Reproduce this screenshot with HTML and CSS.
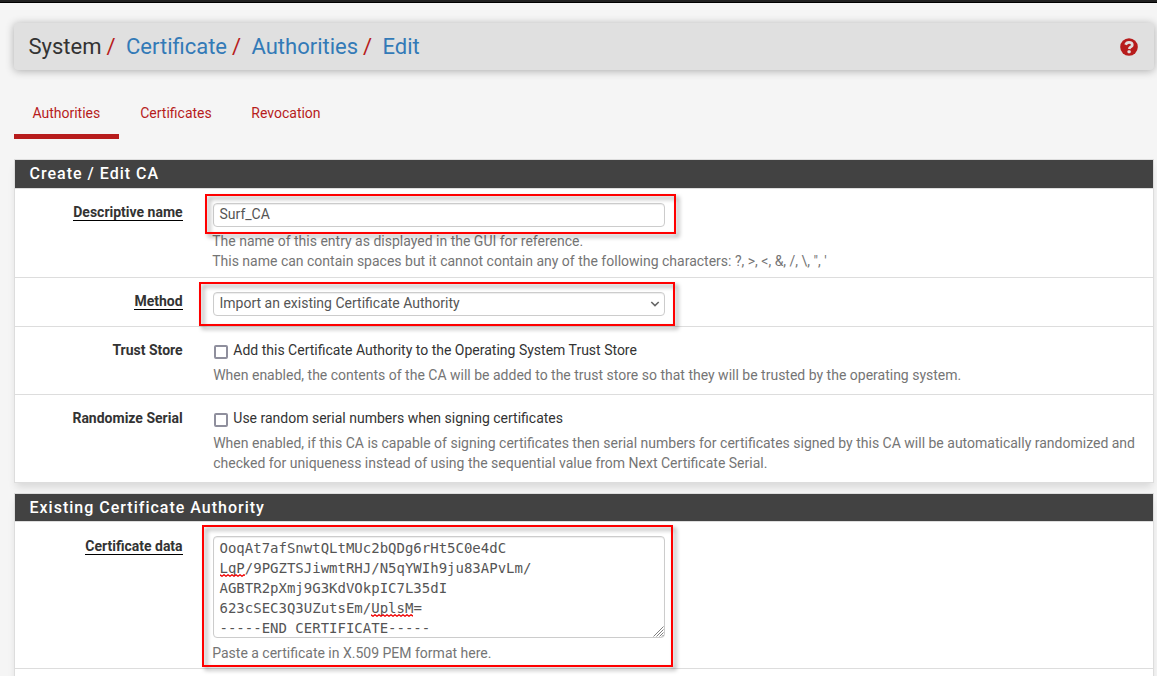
FILE: index.html
```html
<!DOCTYPE html>
<html lang="en">
<head>
<meta charset="utf-8">
<title>System: Certificate: Authorities: Edit</title>
<link rel="stylesheet" href="styles.css">
</head>
<body>
<div class="navbar"></div>
<header class="page-header">
  <div class="breadcrumb"><span>System</span><i>/</i><a>Certificate</a><i>/</i><a>Authorities</a><i>/</i><a>Edit</a></div>
  <svg class="help-icon" viewBox="0 0 18 18"><circle cx="9" cy="9" r="8.8" fill="#b71c1c"/><path d="M5.6 6.8C6.2 5 7.3 4.3 9 4.3c2 0 3.3 1 3.3 2.6 0 2-2.9 2.1-3.1 4.1" fill="none" stroke="#e0e0e0" stroke-width="2.7"/><rect x="7.5" y="12.2" width="3.2" height="3" rx="1" fill="#e0e0e0"/></svg>
</header>
<nav class="tabs"><a class="tab active">Authorities</a><a class="tab">Certificates</a><a class="tab">Revocation</a></nav>
<section class="panel">
  <h2 class="panel-heading">Create / Edit CA</h2>
  <div class="row row-name">
    <div class="label"><span class="required">Descriptive name</span></div>
    <div class="field">
      <div class="control">Surf_CA</div>
      <p class="help help-name">The name of this entry as displayed in the GUI for reference.<br>This name can contain spaces but it cannot contain any of the following characters: ?, &gt;, &lt;, &amp;, /, \, ", '</p>
      <div class="mark mark-name"></div>
    </div>
  </div>
  <div class="row row-method">
    <div class="label"><span class="required">Method</span></div>
    <div class="field">
      <div class="control select"><span>Import an existing Certificate Authority</span><svg class="chevron" viewBox="0 0 10 6"><path d="M1.3 1 5 4.6 8.7 1" fill="none" stroke="#666" stroke-width="1.6"/></svg></div>
      <div class="mark mark-method"></div>
    </div>
  </div>
  <div class="row row-trust">
    <div class="label"><span>Trust Store</span></div>
    <div class="field">
      <div class="check"><span class="box"></span><span>Add this Certificate Authority to the Operating System Trust Store</span></div>
      <p class="help help-check">When enabled, the contents of the CA will be added to the trust store so that they will be trusted by the operating system.</p>
    </div>
  </div>
  <div class="row row-serial">
    <div class="label"><span>Randomize Serial</span></div>
    <div class="field">
      <div class="check"><span class="box"></span><span>Use random serial numbers when signing certificates</span></div>
      <p class="help help-check">When enabled, if this CA is capable of signing certificates then serial numbers for certificates signed by this CA will be automatically randomized and<br>checked for uniqueness instead of using the sequential value from Next Certificate Serial.</p>
    </div>
  </div>
</section>
<section class="panel panel-existing">
  <h2 class="panel-heading heading-existing">Existing Certificate Authority</h2>
  <div class="row row-cert">
    <div class="label label-cert"><span class="required">Certificate data</span></div>
    <div class="field">
      <div class="textarea">OoqAt7afSnwtQLtMUc2bQDg6rHt5C0e4dC<br><span class="misspelt">LqP<svg class="squiggle" width="25" height="3"><path d="M0 .8l2 1.4 2-1.4 2 1.4 2-1.4 2 1.4 2-1.4 2 1.4 2-1.4 2 1.4 2-1.4 2 1.4 2-1.4 1 .7"/></svg></span>/9PGZTSJiwmtRHJ/N5qYWIh9ju83APvLm/<br>AGBTR2pXmj9G3KdVOkpIC7L35dI<br>623cSEC3Q3UZutsEm/<span class="misspelt">UplsM<svg class="squiggle" width="42" height="3"><path d="M0 .8l2 1.4 2-1.4 2 1.4 2-1.4 2 1.4 2-1.4 2 1.4 2-1.4 2 1.4 2-1.4 2 1.4 2-1.4 2 1.4 2-1.4 2 1.4 2-1.4 2 1.4 2-1.4 2 1.4 2-1.4 2 1.4"/></svg></span>=<br>-----END CERTIFICATE-----<svg class="grip" viewBox="0 0 11 11"><path d="M.5 10.5l10-10M3.5 10.5l7-7M6.5 10.5l4-4M9 10.5l1.5-1.5" fill="none" stroke="#808080" stroke-width="1"/></svg></div>
      <p class="help help-cert">Paste a certificate in X.509 PEM format here.</p>
      <div class="mark mark-cert"></div>
    </div>
  </div>
  <div class="row-next"></div>
</section>
</body>
</html>
```
FILE: styles.css
```css
* { box-sizing: border-box; }
body { margin: 0; height: 676px; overflow: hidden; background: #f5f5f5; color: #333; font: 14px/20px Roboto, sans-serif; }
.navbar { height: 3px; background: #212121; border-bottom: 1px solid #000; }
.page-header {
  display: flex; align-items: center; justify-content: space-between;
  width: 1140px; height: 47px; margin: 20px 0 0 14px; padding: 0 15.7px 0 14.5px;
  background: #e0e0e0; border-radius: 4px; box-shadow: 0 1px 8px rgba(0,0,0,.3);
}
.breadcrumb { display: flex; font-size: 22px; line-height: 30px; }
.breadcrumb i { margin: 0 10.4px 0 5px; color: #b71c1c; font-style: normal; }
.breadcrumb a { color: #337ab7; }
.help-icon { width: 18px; height: 18px; margin-top: 1px; }
.tabs { display: flex; width: 1140px; height: 69px; margin-left: 14px; padding-top: 20px; }
.tab { height: 49px; padding: 13px 18.4px 0; color: #b71c1c; border-bottom: 5px solid transparent; }
.tab + .tab { margin-left: 2.8px; }
.tab.active { width: 105px; border-bottom-color: #b71c1c; }
.panel { width: 1140px; margin: 20px 0 0 14px; background: #fff; border: 1px solid #ddd; box-shadow: 0 6px 8px -2px rgba(0,0,0,.12); }
.panel-existing { margin-top: 10px; }
.panel-heading { height: 29px; margin: 0; padding: 0 14.5px; background: #424242; border-bottom: 1px solid #ddd; color: #fff; font-size: 16px; font-weight: 500; line-height: 27px; letter-spacing: 1px; }
.heading-existing { height: 28px; }
.row { display: flex; border-bottom: 1px solid #ddd; }
.row-name { height: 89px; }
.row-method { height: 49px; }
.row-trust { height: 68px; }
.row-serial { height: 87px; border-bottom: 0; }
.row-cert { height: 147px; }
.row-next { height: 30px; }
.label { width: 168px; padding: 13px .4px 0 0; font-weight: 700; text-align: right; }
.label-cert { padding-top: 14px; }
.label span { display: inline-block; height: 19px; }
.required { border-bottom: 1px solid #000; }
.field { position: relative; width: 970px; padding: 14px 0 0 30px; }
.control { width: 452px; height: 24px; padding: 0 5.5px; border: 1px solid #ccc; border-radius: 4px; background: #fff; box-shadow: inset 0 1px 1px rgba(0,0,0,.075); color: #555; line-height: 21px; }
.select { display: flex; justify-content: space-between; align-items: flex-start; padding-right: 4px; }
.chevron { width: 10px; height: 6px; margin-top: 8px; }
.help { margin: 0 0 0 -.8px; color: #757575; white-space: nowrap; }
.help-name { margin-top: 4px; }
.check { display: flex; gap: 6px; margin: -1px 0 5px; padding-left: 1px; }
.box { width: 14px; height: 14px; margin-top: 5px; border: 2px solid #8f8f9d; border-radius: 2px; background: #fff; }
.check span + span { margin-left: -.7px; }
.help-check { padding-left: 1px; }
.textarea { position: relative; width: 452px; height: 102px; padding: 1px 5.5px; border: 1px solid #ccc; border-radius: 4px; box-shadow: inset 0 1px 1px rgba(0,0,0,.075); color: #555; font-family: "DejaVu Sans Mono", monospace; white-space: nowrap; }
.misspelt { position: relative; }
.squiggle { position: absolute; left: 0; bottom: -1px; fill: none; stroke: #f00000; stroke-width: 1.4; }
.grip { position: absolute; right: 0; bottom: 0; width: 11px; height: 11px; }
.help-cert { margin-top: 5px; }
.mark { position: absolute; border: 2px solid #f00; filter: drop-shadow(3px 3px 2px rgba(0,0,0,.4)); }
.mark-name { left: 22px; top: 5px; width: 471px; height: 40px; }
.mark-method { left: 16px; top: 4px; width: 476px; height: 44px; }
.mark-cert { left: 19px; top: 3px; width: 471px; height: 142px; }
```
